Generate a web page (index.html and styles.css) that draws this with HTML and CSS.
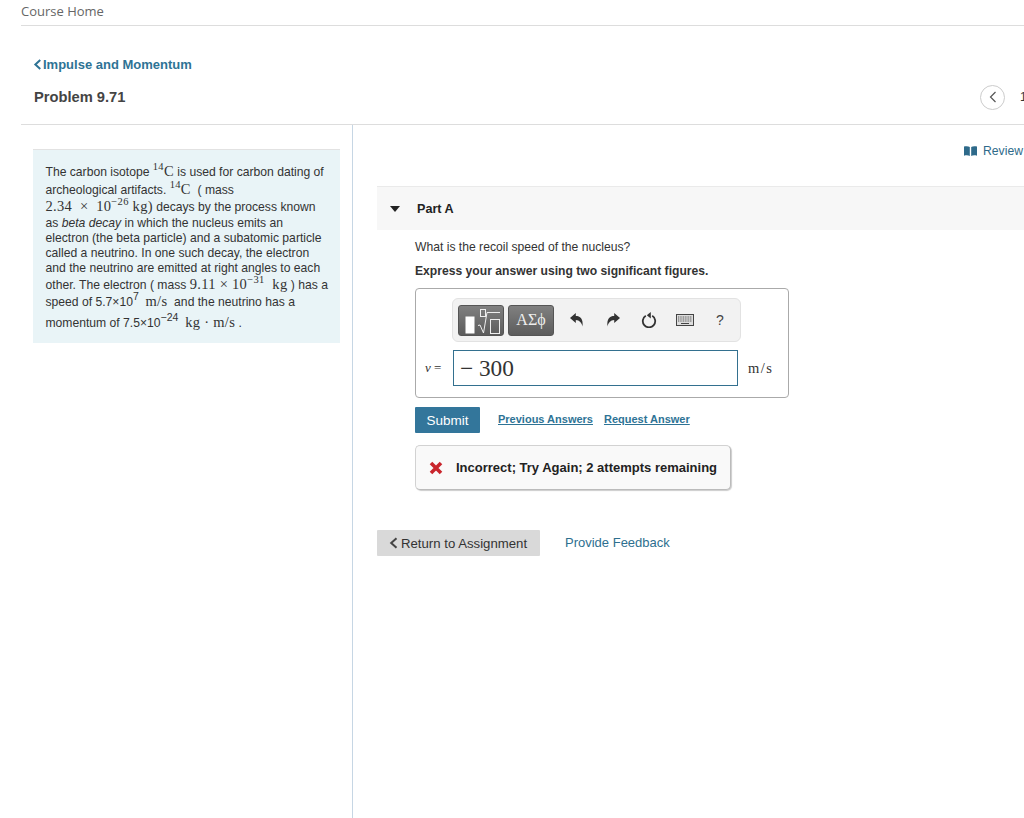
FILE: index.html
```html
<!DOCTYPE html>
<html lang="en">
<head>
<meta charset="utf-8">
<title>Problem 9.71</title>
<link rel="stylesheet" href="styles.css">
</head>
<body>
<div class="page">
  <header class="course-bar"><a class="course-home">Course Home</a></header>
  <section class="title-block">
    <a class="crumb"><svg class="crumb-icon" viewBox="0 0 9 12"><path d="M7.5 1.2 2.2 6l5.3 4.8" fill="none" stroke="#2e7395" stroke-width="2.2"/></svg>Impulse and Momentum</a>
    <div class="title-row">
      <h1 class="problem-title">Problem 9.71</h1>
      <div class="pager">
        <span class="pager-btn"><svg viewBox="0 0 10 14" class="pager-icon"><path d="M7.5 2 2.5 7l5 5" fill="none" stroke="#555" stroke-width="1.2"/></svg></span>
        <span class="pager-num">1</span>
      </div>
    </div>
  </section>
  <main class="columns">
    <aside class="left-col">
      <div class="intro">
        <div class="ln l1">The carbon isotope <span class="m"><sup>14</sup>C</span> is used for carbon dating of</div>
        <div class="ln l2">archeological artifacts. <span class="m"><sup>14</sup>C</span> &nbsp;( mass</div>
        <div class="ln l3"><span class="m">2.34 &nbsp;× &nbsp;10<sup>−26</sup> kg)</span> decays by the process known</div>
        <div class="ln l4">as <em>beta decay</em> in which the nucleus emits an</div>
        <div class="ln l4">electron (the beta particle) and a subatomic particle</div>
        <div class="ln l4">called a neutrino. In one such decay, the electron</div>
        <div class="ln l4">and the neutrino are emitted at right angles to each</div>
        <div class="ln l8">other. The electron ( mass <span class="m">9.11 × 10<sup>−31</sup> &nbsp;kg</span> ) has a</div>
        <div class="ln l2">speed of 5.7×10<sup class="s">7</sup> &nbsp;<span class="m">m/s</span>&nbsp; and the neutrino has a</div>
        <div class="ln l5">momentum of 7.5×10<sup class="s">−24</sup> &nbsp;<span class="m">kg · m/s</span> .</div>
      </div>
    </aside>
    <div class="right-col">
      <div class="review-row">
        <a class="review"><svg class="review-icon" viewBox="0 0 13 10"><path d="M0 .5C2 0 4.500 0 5.800 1V10C4.500 9.200 2 9.200 0 9.700zM13 .5C11 0 8.500 0 7.200 1V10C8.500 9.200 11 9.200 13 9.700z" fill="#2e6a8a"/></svg>Review</a>
      </div>
      <div class="part-head">
        <svg class="caret" viewBox="0 0 10 6"><path d="M0 0h10L5 6z" fill="#222"/></svg>
        <span class="part-label">Part A</span>
      </div>
      <div class="part-body">
        <p class="question">What is the recoil speed of the nucleus?</p>
        <p class="instruction">Express your answer using two significant figures.</p>
        <div class="answer-box">
          <div class="toolbar">
            <span class="tool-btn tool-math">
              <svg viewBox="0 0 42 28" class="math-icon">
                <rect x="5.500" y="10.500" width="9" height="17" fill="#fff"/>
                <rect x="20.500" y="3.500" width="5" height="7" fill="none" stroke="#eee"/>
                <path d="M18 19.500l2-.5 3.500 8L27 6.500h13" fill="none" stroke="#eee" stroke-width="1"/>
                <rect x="30.500" y="13.500" width="9" height="14" fill="none" stroke="#eee"/>
              </svg>
            </span>
            <span class="tool-btn tool-greek">ΑΣϕ</span>
            <span class="tool-actions">
              <svg class="act" viewBox="0 0 16 16"><path d="M1 6 6.800 1v3C11 4 14.500 6.500 13.500 14.500 12.800 11 10.500 8 6.800 8v3z" fill="#333"/></svg>
              <svg class="act" viewBox="0 0 16 16"><path d="M15 6 9.200 1v3C5 4 1.500 6.500 2.500 14.500 3.200 11 5.500 8 9.200 8v3z" fill="#333"/></svg>
              <svg class="act" viewBox="0 0 16 16"><path d="M4.800 3.800a6.200 6.200 0 1 0 6.400 0" fill="none" stroke="#333" stroke-width="1.800"/><path d="M9.800 0v6.500l-4-3.200z" fill="#333"/></svg>
              <svg class="act act-kb" viewBox="0 0 18 12"><rect x=".5" y=".5" width="17" height="11" fill="#ddd" stroke="#444"/><path d="M2 3h14M2 5h14M2 7h14" stroke="#555" stroke-dasharray="1 .7"/><path d="M5 9.500h8" stroke="#444"/></svg>
              <span class="help">?</span>
            </span>
          </div>
          <div class="input-row">
            <span class="var"><i>v</i> =</span>
            <div class="math-input">− 300</div>
            <span class="unit">m/s</span>
          </div>
        </div>
        <div class="submit-row">
          <button class="submit">Submit</button>
          <a class="text-link">Previous Answers</a>
          <a class="text-link">Request Answer</a>
        </div>
        <div class="feedback">
          <svg class="x-icon" viewBox="0 0 14 14"><path d="M2 2l10 10M12 2 2 12" stroke="#c9252c" stroke-width="3.600"/></svg>
          <span>Incorrect; Try Again; 2 attempts remaining</span>
        </div>
      </div>
      <div class="footer-row">
        <a class="return"><svg class="return-icon" viewBox="0 0 9 12"><path d="M7.500 1.200 2.200 6l5.300 4.800" fill="none" stroke="#444" stroke-width="2"/></svg>Return to Assignment</a>
        <a class="provide">Provide Feedback</a>
      </div>
    </div>
  </main>
</div>
</body>
</html>
```
FILE: styles.css
```css
* { box-sizing: border-box; }
html, body { margin: 0; height: 100%; overflow: hidden; background: #fff; }
body { font-family: "Liberation Sans", Arial, sans-serif; color: #333; }
.page { width: 1024px; height: 818px; display: flex; flex-direction: column; padding-left: 21px; overflow: hidden; }
.course-bar { height: 26px; border-bottom: 1px solid #ddd; flex: none; padding-top: 3px; }
.course-home { font-family: "Open Sans", sans-serif; font-size: 13px; line-height: 17px; color: #666; display: block; }
.title-block { height: 99px; flex: none; border-bottom: 1px solid #ddd; padding: 30px 0 0 12px; }
.crumb { display: flex; align-items: center; font-size: 13px; font-weight: 700; line-height: 17px; color: #2e7395; }
.crumb-icon { width: 9px; height: 11px; margin-right: 1px; }
.title-row { display: flex; align-items: center; justify-content: space-between; margin-top: 12px; height: 24px; padding-left: 1px; }
.problem-title { margin: 0; font-size: 14.700px; line-height: 18px; font-weight: 700; color: #444; }
.pager { display: flex; align-items: center; gap: 15px; margin-right: -2px; }
.pager-btn { width: 25px; height: 25px; border: 1px solid #ccc; border-radius: 50%; display: flex; align-items: center; justify-content: center; }
.pager-icon { width: 10px; height: 14px; }
.pager-num { font-size: 12px; color: #333; width: 6px; }
.columns { flex: 1; display: flex; min-height: 0; }
.left-col { width: 332px; flex: none; border-right: 1px solid #c6d6e4; padding: 24px 12px 0 12px; }
.intro { background: #e9f4f7; border-top: 1px solid #e2e2e2; height: 194px; width: 307px; padding: 12px 0 0 12.500px; font-size: 12.150px; color: #333; }
.ln { white-space: nowrap; }
.l1 { height: 18px; line-height: 18px; }
.l2 { height: 18px; line-height: 19px; }
.l3 { height: 18px; line-height: 17px; }
.l4 { height: 15px; line-height: 15px; }
.l8 { height: 16px; line-height: 17px; }
.l5 { height: 20px; line-height: 25px; }
.m { font-family: "Liberation Serif", serif; font-size: 14.500px; letter-spacing: .3px; }
.ln sup { font-size: 10.500px; line-height: 0; vertical-align: 6px; }
.ln sup.s { font-family: "Liberation Sans", sans-serif; }
.right-col { flex: 1; min-width: 0; padding-left: 24px; }
.review-row { height: 61px; display: flex; justify-content: flex-end; padding: 18px 1px 0 0; }
.review { display: flex; align-items: center; height: 15px; font-size: 12.200px; color: #2e6a8a; }
.review-icon { width: 13px; height: 10px; margin-right: 6px; }
.part-head { height: 44px; background: #f7f7f7; border-top: 1px solid #eaeaea; display: flex; align-items: center; padding-left: 13px; }
.caret { width: 10px; height: 6px; margin-right: 17px; }
.part-label { font-size: 12.600px; font-weight: 700; color: #222; }
.part-body { padding: 10px 0 0 38px; }
.question { margin: 0; font-size: 12.150px; line-height: 15px; color: #333; }
.instruction { margin: 9px 0 0; font-size: 12.150px; line-height: 15px; font-weight: 700; color: #333; }
.answer-box { width: 374px; height: 110px; margin-top: 9px; border: 1px solid #aaa; border-radius: 4px; padding: 9px 0 0 36px; }
.toolbar { width: 289px; height: 44px; background: #f2f2f2; border: 1px solid #e2e2e2; border-radius: 6px; display: flex; align-items: center; padding-left: 5px; gap: 4px; }
.tool-btn { height: 31px; border-radius: 3px; background: linear-gradient(#808080, #5c5c5c); border: 1px solid #555; display: flex; align-items: center; justify-content: center; color: #eee; }
.tool-math { width: 46px; }
.math-icon { width: 42px; height: 28px; flex: none; }
.tool-greek { width: 46px; font-family: "Liberation Serif", serif; font-size: 16px; }
.tool-actions { display: flex; align-items: center; margin-left: 11px; gap: 20px; }
.act { width: 16px; height: 16px; }
.act-kb { width: 18px; height: 12px; margin-left: -1px; }
.help { font-family: "Liberation Sans", sans-serif; font-size: 14px; color: #444; margin-left: 2px; }
.input-row { display: flex; align-items: center; margin-top: 8px; margin-left: -27px; }
.var { width: 28px; font-family: "Liberation Serif", serif; font-size: 13px; color: #333; white-space: nowrap; }
.math-input { width: 285px; height: 36px; border: 1px solid #33708f; font-family: "Liberation Serif", serif; font-size: 23.300px; line-height: 34px; padding-left: 6px; color: #333; }
.unit { margin-left: 10px; font-family: "Liberation Serif", serif; font-size: 14.500px; letter-spacing: 1.500px; color: #333; }
.submit-row { display: flex; align-items: center; margin-top: 9px; height: 26px; }
.submit { width: 65px; height: 26px; border: 0; border-radius: 1px; background: #33769b; color: #fff; font: 13.500px "Liberation Sans", sans-serif; padding: 0; margin-right: 18px; }
.text-link { font-size: 11px; font-weight: 700; color: #2e7395; text-decoration: underline; margin: 0 11px 2px 0; }
.feedback { width: 316px; height: 45px; margin-top: 12px; border: 1px solid #d2d2d2; border-bottom-color: #bbb; border-right-color: #bbb; border-radius: 5px; background: #f9f9f9; box-shadow: 1px 1px 1px #ccc; display: flex; align-items: center; padding-left: 13px; font-size: 13px; font-weight: 700; color: #222; }
.x-icon { width: 14px; height: 14px; margin-right: 13px; }
.footer-row { display: flex; align-items: center; margin-top: 40px; }
.return { width: 163px; height: 26px; background: #d9d9d9; display: flex; align-items: center; padding-left: 12px; font-size: 13.200px; color: #333; border-radius: 1px; }
.return-icon { width: 9px; height: 12px; margin-right: 3px; }
.provide { margin: 0 0 2px 25px; font-size: 13px; color: #2e6f8f; }
```
